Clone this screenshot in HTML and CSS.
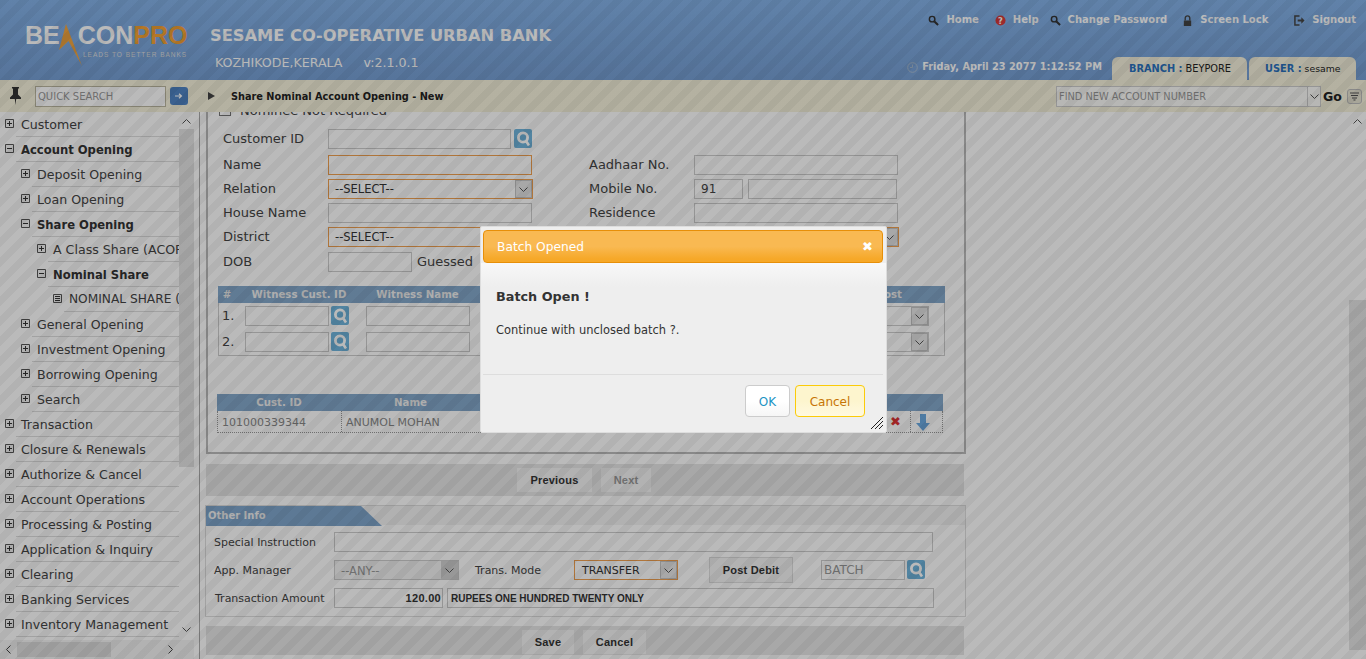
FILE: index.html
```html
<!DOCTYPE html>
<html lang="en">
<head>
    <meta charset="UTF-8">
    <title>Share Nominal Account Opening - New</title>
    <link rel="stylesheet" href="styles.css">
</head>
<body>
    <svg class="defs" width="0" height="0">
        <symbol id="i-plus" viewBox="0 0 9 9"><path d="M.5.5h8v8h-8z" fill="#f4f4f4" stroke="#555"/><path d="M2 4.5h5M4.5 2v5" stroke="#333"/></symbol>
        <symbol id="i-minus" viewBox="0 0 9 9"><path d="M.5.5h8v8h-8z" fill="#f4f4f4" stroke="#555"/><path d="M2 4.5h5" stroke="#333"/></symbol>
        <symbol id="i-leaf" viewBox="0 0 9 9"><path d="M.5.5h8v8h-8z" fill="#f4f4f4" stroke="#555"/><path d="M2 2.5h5M2 4.5h5M2 6.5h5" stroke="#333"/></symbol>
        <symbol id="i-find" viewBox="0 0 18 19"><rect width="18" height="19" rx="2" fill="#6fb4dc"/><circle cx="9" cy="8.5" r="4.6" fill="none" stroke="#fff" stroke-width="2.8"/><path d="M12 12l3 4.5" stroke="#fff" stroke-width="2.6"/></symbol>
        <symbol id="i-lens" viewBox="0 0 12 12"><circle cx="4.5" cy="4.5" r="3" fill="none" stroke="#333" stroke-width="1.6"/><path d="M7 7l4 4" stroke="#333" stroke-width="2.2"/></symbol>
        <symbol id="i-chev" viewBox="0 0 9 5"><path d="M.5.5l4 4 4-4" fill="none" stroke="#555"/></symbol>
    </svg>

    <div class="header">
        <div class="logo">
            <div class="logo-word">
                <span>BE</span>
                <svg class="logo-peak" width="26" height="43" viewBox="0 0 26 43"><path d="M9 0 L25 42 L11.5 17 L2 26 Z" fill="#f0a540"/></svg>
                <span>CON</span><span class="logo-pro">PRO</span>
            </div>
            <div class="logo-tag">LEADS TO BETTER BANKS</div>
        </div>
        <div class="bank">
            <div class="bank-name">SESAME CO-OPERATIVE URBAN BANK</div>
            <div class="bank-sub"><span>KOZHIKODE,KERALA</span><span class="bank-ver">v:2.1.0.1</span></div>
        </div>
        <div class="header-right">
            <div class="top-links">
                <a class="top-link link-home"><svg class="top-icon"><use href="#i-lens"/></svg>Home</a>
                <a class="top-link link-help"><svg class="top-icon" viewBox="0 0 12 12"><circle cx="6" cy="6" r="5.5" fill="#d83a3a"/><text x="6" y="9.5" text-anchor="middle" font-size="9" font-weight="700" fill="#fff">?</text></svg>Help</a>
                <a class="top-link link-pass"><svg class="top-icon"><use href="#i-lens"/></svg>Change Password</a>
                <a class="top-link link-lock"><svg class="top-icon" viewBox="0 0 12 12"><path d="M3.5 6V3.5a2.5 2.5 0 0 1 5 0V6" fill="none" stroke="#444" stroke-width="1.5"/><rect x="2" y="6" width="8" height="6" fill="#444"/></svg>Screen Lock</a>
                <a class="top-link link-out"><svg class="top-icon" viewBox="0 0 12 12"><path d="M6 1H1v10h5" fill="none" stroke="#444" stroke-width="1.6"/><path d="M4 5h4V2.5L11.5 6 8 9.5V7H4z" fill="#444"/></svg>Signout</a>
            </div>
            <div class="status-row">
                <svg class="clock" width="11" height="11" viewBox="0 0 11 11"><circle cx="5.5" cy="5.5" r="4.8" fill="none" stroke="#a9bdd3"/><path d="M5.5 2.5v3H3" fill="none" stroke="#a9bdd3"/></svg>
                <span class="date">Friday, April 23 2077 1:12:52 PM</span>
                <div class="tab tab-branch"><b>BRANCH :</b><span>BEYPORE</span></div>
                <div class="tab tab-user"><b>USER :</b><span>sesame</span></div>
            </div>
        </div>
    </div>

    <div class="toolbar">
        <svg class="pin" width="13" height="18" viewBox="0 0 13 18"><path d="M3 0h7v1.5H9v6l3 3V12H7.2L6.5 18l-.7-6H1v-1.5l3-3v-6H3z" fill="#333"/></svg>
        <input class="quick" type="text" placeholder="QUICK SEARCH">
        <div class="quick-go"><svg width="8" height="6" viewBox="0 0 8 6"><path d="M0 3h6M4 .8L6.5 3 4 5.2" fill="none" stroke="#fff" stroke-width="1.2"/></svg></div>
        <div class="crumb-arrow"></div>
        <div class="crumb">Share Nominal Account Opening - New</div>
        <div class="find">
            <span>FIND NEW ACCOUNT NUMBER</span>
            <div class="find-btn"><svg width="9" height="5"><use href="#i-chev"/></svg></div>
        </div>
        <div class="go">Go</div>
        <div class="menu-btn"><svg width="9" height="9" viewBox="0 0 9 9"><path d="M0 1h9M1 3.5h7M2 6h5M3.5 8h2" stroke="#555"/></svg></div>
    </div>

    <div class="workspace">
        <div class="sidebar">
            <div class="tree-wrap">
                <ul class="tree">
                    <li class="lv0"><svg class="ex"><use href="#i-plus"/></svg><span>Customer</span></li>
                    <li class="lv0 open"><svg class="ex"><use href="#i-minus"/></svg><span>Account Opening</span></li>
                    <li class="lv1"><svg class="ex"><use href="#i-plus"/></svg><span>Deposit Opening</span></li>
                    <li class="lv1"><svg class="ex"><use href="#i-plus"/></svg><span>Loan Opening</span></li>
                    <li class="lv1 open"><svg class="ex"><use href="#i-minus"/></svg><span>Share Opening</span></li>
                    <li class="lv2"><svg class="ex"><use href="#i-plus"/></svg><span>A Class Share (ACOPENING)</span></li>
                    <li class="lv2 open"><svg class="ex"><use href="#i-minus"/></svg><span>Nominal Share</span></li>
                    <li class="lv3"><svg class="ex"><use href="#i-leaf"/></svg><span>NOMINAL SHARE (NEW)</span></li>
                    <li class="lv1"><svg class="ex"><use href="#i-plus"/></svg><span>General Opening</span></li>
                    <li class="lv1"><svg class="ex"><use href="#i-plus"/></svg><span>Investment Opening</span></li>
                    <li class="lv1"><svg class="ex"><use href="#i-plus"/></svg><span>Borrowing Opening</span></li>
                    <li class="lv1"><svg class="ex"><use href="#i-plus"/></svg><span>Search</span></li>
                    <li class="lv0"><svg class="ex"><use href="#i-plus"/></svg><span>Transaction</span></li>
                    <li class="lv0"><svg class="ex"><use href="#i-plus"/></svg><span>Closure &amp; Renewals</span></li>
                    <li class="lv0"><svg class="ex"><use href="#i-plus"/></svg><span>Authorize &amp; Cancel</span></li>
                    <li class="lv0"><svg class="ex"><use href="#i-plus"/></svg><span>Account Operations</span></li>
                    <li class="lv0"><svg class="ex"><use href="#i-plus"/></svg><span>Processing &amp; Posting</span></li>
                    <li class="lv0"><svg class="ex"><use href="#i-plus"/></svg><span>Application &amp; Inquiry</span></li>
                    <li class="lv0"><svg class="ex"><use href="#i-plus"/></svg><span>Clearing</span></li>
                    <li class="lv0"><svg class="ex"><use href="#i-plus"/></svg><span>Banking Services</span></li>
                    <li class="lv0"><svg class="ex"><use href="#i-plus"/></svg><span>Inventory Management</span></li>
                </ul>
                <div class="vbar">
                    <svg class="bar-up" width="9" height="5"><use href="#i-chev"/></svg>
                    <div class="vthumb"></div>
                    <svg class="bar-down" width="9" height="5"><use href="#i-chev"/></svg>
                </div>
            </div>
            <div class="hbar">
                <svg class="bar-left" width="5" height="9" viewBox="0 0 5 9"><path d="M4.5.5l-4 4 4 4" fill="none" stroke="#444"/></svg>
                <div class="hthumb"></div>
                <svg class="bar-right" width="5" height="9" viewBox="0 0 5 9"><path d="M.5.5l4 4-4 4" fill="none" stroke="#444"/></svg>
            </div>
        </div>

        <div class="content">
            <div class="form-box">
                <div class="nominee"><span class="check"></span>Nominee Not Required</div>

                <div class="fields">
                    <label>Customer ID</label>
                    <div class="cell-left"><input class="in w183" type="text"><svg class="find-icon"><use href="#i-find"/></svg></div>
                    <span></span><span></span><span></span>

                    <label>Name</label>
                    <input class="in w204 req" type="text">
                    <span></span>
                    <label>Aadhaar No.</label>
                    <input class="in w204" type="text">

                    <label>Relation</label>
                    <div class="sel w205 req">--SELECT--<i class="sel-btn"><svg width="9" height="5"><use href="#i-chev"/></svg></i></div>
                    <span></span>
                    <label>Mobile No.</label>
                    <div class="cell-left"><input class="in w49" type="text" value="91"><input class="in w149" type="text"></div>

                    <label>House Name</label>
                    <input class="in w204" type="text">
                    <span></span>
                    <label>Residence</label>
                    <input class="in w204" type="text">

                    <label>District</label>
                    <div class="sel w205 req">--SELECT--<i class="sel-btn"><svg width="9" height="5"><use href="#i-chev"/></svg></i></div>
                    <span></span>
                    <label>Taluk</label>
                    <div class="sel w205 req">--SELECT--<i class="sel-btn"><svg width="9" height="5"><use href="#i-chev"/></svg></i></div>

                    <label>DOB</label>
                    <div class="cell-left"><input class="in w84" type="text"><span class="guess">Guessed</span></div>
                    <span></span><span></span><span></span>
                </div>

                <div class="witness">
                    <div class="wit-head">
                        <span>#</span><span>Witness Cust. ID</span><span class="wit-name">Witness Name</span><span class="wit-last">Post</span>
                    </div>
                    <div class="wit-row">
                        <span>1.</span>
                        <div class="cell-left"><input class="in w84" type="text"><svg class="find-icon"><use href="#i-find"/></svg></div>
                        <input class="in w104" type="text">
                        <div class="sel wit-sel">--<i class="sel-btn"><svg width="9" height="5"><use href="#i-chev"/></svg></i></div>
                    </div>
                    <div class="wit-row">
                        <span>2.</span>
                        <div class="cell-left"><input class="in w84" type="text"><svg class="find-icon"><use href="#i-find"/></svg></div>
                        <input class="in w104" type="text">
                        <div class="sel wit-sel">--<i class="sel-btn"><svg width="9" height="5"><use href="#i-chev"/></svg></i></div>
                    </div>
                </div>

                <div class="nominees">
                    <div class="nom-head"><span>Cust. ID</span><span>Name</span><span></span><span></span></div>
                    <div class="nom-row">
                        <span>101000339344</span>
                        <span>ANUMOL MOHAN</span>
                        <span class="nom-del">&#10006;</span>
                        <span class="nom-move"><svg width="14" height="17" viewBox="0 0 14 17"><path d="M4 0h6v9h4l-7 8-7-8h4z" fill="#6aa8e0"/></svg></span>
                    </div>
                </div>
            </div>

            <div class="btn-bar bar-nav">
                <button class="btn b-prev">Previous</button>
                <button class="btn b-next" disabled>Next</button>
            </div>

            <div class="other">
                <div class="other-head"><div class="other-tab">Other Info</div></div>
                <div class="other-row">
                    <label class="ol">Special Instruction</label>
                    <input class="in w599" type="text">
                </div>
                <div class="other-row">
                    <label class="ol">App. Manager</label>
                    <div class="sel w125 off">--ANY--<i class="sel-btn"><svg width="9" height="5"><use href="#i-chev"/></svg></i></div>
                    <label class="trans">Trans. Mode</label>
                    <div class="sel w104 req">TRANSFER<i class="sel-btn"><svg width="9" height="5"><use href="#i-chev"/></svg></i></div>
                    <button class="btn post">Post Debit</button>
                    <input class="in w84 batch" type="text" placeholder="BATCH">
                    <svg class="find-icon"><use href="#i-find"/></svg>
                </div>
                <div class="other-row">
                    <label class="ol ol-amt">Transaction Amount</label>
                    <input class="in w109 amount" type="text" value="120.00">
                    <input class="in w487 words" type="text" value="RUPEES ONE HUNDRED TWENTY ONLY">
                </div>
            </div>

            <div class="btn-bar bar-save">
                <button class="btn b-save">Save</button>
                <button class="btn b-cancel">Cancel</button>
            </div>
        </div>

        <div class="page-bar">
            <svg class="bar-up" width="9" height="5"><use href="#i-chev"/></svg>
            <div class="page-thumb"></div>
        </div>
    </div>

    <div class="overlay"></div>

    <div class="dialog">
        <div class="dialog-title"><span>Batch Opened</span><span class="dialog-close">&#10006;</span></div>
        <div class="dialog-body">
            <h3>Batch Open !</h3>
            <p>Continue with unclosed batch ?.</p>
        </div>
        <div class="dialog-foot">
            <button class="d-ok">OK</button>
            <button class="d-cancel">Cancel</button>
        </div>
        <svg class="grip" width="12" height="12" viewBox="0 0 12 12"><path d="M0 12L12 0M4 12l8-8M8 12l4-4" stroke="#222"/></svg>
    </div>
</body>
</html>
```
FILE: styles.css
```css
/* page */
* {
    box-sizing: border-box;
}

body {
    margin: 0;
    width: 1366px;
    height: 659px;
    overflow: hidden;
    position: relative;
    background-color: #fff;
    font-family: "DejaVu Sans", sans-serif;
    font-size: 13px;
    color: #444;
}

.defs {
    position: absolute;
}

/* header */
.header {
    height: 80px;
    display: flex;
    background: linear-gradient(#84b2e8, #769fd4);
}

.logo {
    margin: 20px 0 0 25px;
    width: 161px;
    font-family: "Liberation Sans", sans-serif;
}

.logo-word {
    display: flex;
    height: 31px;
    align-items: flex-start;
    font-size: 25px;
    font-weight: 700;
    line-height: 30px;
    color: #fff;
}

.logo-peak {
    margin: 4px -5px 0 -3px;
    flex: none;
}

.logo-pro {
    color: #f6a334;
}

.logo-tag {
    margin: 0 0 0 58px;
    font-size: 6.5px;
    letter-spacing: 1px;
    line-height: 8px;
    color: #ddd;
    white-space: nowrap;
}

.bank {
    margin: 25px 0 0 24px;
    color: #fff;
}

.bank-name {
    font-size: 16.25px;
    font-weight: 700;
    line-height: 22px;
    white-space: nowrap;
}

.bank-sub {
    margin: 8px 0 0 5px;
    font-size: 12.6px;
    line-height: 16px;
    white-space: nowrap;
}

.bank-ver {
    margin-left: 21px;
}

.header-right {
    margin-left: auto;
    display: flex;
    flex-direction: column;
    align-items: flex-end;
    padding-right: 10px;
}

.top-links {
    display: flex;
    margin-top: 13px;
    height: 14px;
    font-size: 10px;
    font-weight: 700;
    line-height: 14px;
    color: #fff;
}

.top-link {
    display: flex;
    align-items: center;
    white-space: nowrap;
}

.top-icon {
    width: 11px;
    height: 11px;
    margin-right: 7px;
}

.link-help {
    margin-left: 16px;
}

.link-pass {
    margin-left: 11px;
}

.link-lock {
    margin-left: 15px;
}

.link-out {
    margin-left: 26px;
}

.status-row {
    margin-top: 30px;
    display: flex;
    align-items: flex-end;
    height: 23px;
}

.clock {
    margin: 0 4px 7px 0;
}

.date {
    font-size: 9.8px;
    font-weight: 700;
    line-height: 14px;
    color: #fff;
    margin-bottom: 6px;
    white-space: nowrap;
}

.tab {
    height: 23px;
    background-color: #f5f1dd;
    border-radius: 6px 6px 0 0;
    font-size: 9.8px;
    line-height: 23px;
    color: #222;
    white-space: nowrap;
    display: flex;
}

.tab b {
    color: #2a72c0;
}

.tab-branch {
    width: 135px;
    margin-left: 10px;
    padding-left: 17px;
}

.tab-branch span {
    margin-left: 3px;
}

.tab-user {
    width: 107px;
    margin-left: 2px;
    padding-left: 16px;
}

.tab-user span {
    margin-left: 3px;
    font-size: 9.3px;
}

/* toolbar */
.toolbar {
    height: 32px;
    display: flex;
    align-items: center;
    background-color: #f7f3dd;
}

.pin {
    margin-left: 9px;
    flex: none;
}

.quick {
    width: 131px;
    height: 21px;
    margin-left: 13px;
    padding: 0 2px;
    background-color: #fff;
    border: 1px solid #bbb7a0;
    font: 10px "DejaVu Sans", sans-serif;
}

.quick::placeholder, .batch::placeholder {
    color: #999;
    opacity: 1;
}

.quick-go {
    width: 18px;
    height: 18px;
    margin-left: 4px;
    border-radius: 3px;
    background-color: #4f84c4;
    display: flex;
    align-items: center;
    justify-content: center;
}

.crumb-arrow {
    margin-left: 20px;
    border-left: 7px solid #444;
    border-top: 4px solid transparent;
    border-bottom: 4px solid transparent;
}

.crumb {
    margin-left: 16px;
    font-size: 9.75px;
    font-weight: 700;
    color: #222;
    white-space: nowrap;
}

.find {
    margin-left: auto;
    width: 265px;
    height: 21px;
    display: flex;
    align-items: center;
    justify-content: space-between;
    padding-left: 2px;
    background-color: #fbfbf8;
    border: 1px solid #ccc;
    font-size: 9.8px;
    color: #999;
}

.find-btn {
    width: 13px;
    height: 19px;
    display: flex;
    align-items: center;
    justify-content: center;
    border-left: 1px solid #ccc;
}

.go {
    width: 17px;
    flex: none;
    margin-left: 2px;
    font-size: 12.5px;
    font-weight: 700;
    color: #222;
}

.menu-btn {
    width: 15px;
    height: 15px;
    margin: 0 4px 0 7px;
    border: 1px solid #bbb;
    border-radius: 3px;
    background-color: #e6e3d2;
    display: flex;
    align-items: center;
    justify-content: center;
}

/* left tree */
.workspace {
    display: flex;
    height: 547px;
}

.sidebar {
    width: 200px;
    flex: none;
    border-right: 1px solid #aaa;
    padding-right: 5px;
}

.tree-wrap {
    height: 528px;
    display: flex;
}

.tree {
    list-style: none;
    margin: 0;
    padding: 0;
    width: 179px;
    height: 528px;
    overflow: hidden;
}

.tree li {
    height: 25px;
    display: flex;
}

.tree li span {
    flex: 1;
    min-width: 0;
    padding-left: 5px;
    font-size: 12.6px;
    line-height: 25px;
    white-space: nowrap;
    overflow: hidden;
    border-bottom: 1px solid #ddd;
}

.tree .open span {
    font-weight: 700;
    font-size: 11.6px;
    line-height: 26px;
    color: #333;
}

.tree .lv3 span {
    font-size: 12.2px;
}

.ex {
    width: 9px;
    height: 9px;
    margin: 7px 2px 0 0;
    flex: none;
}

.lv0 .ex { margin-left: 5px; }
.lv1 .ex { margin-left: 21px; }
.lv2 .ex { margin-left: 37px; }
.lv3 .ex { margin-left: 53px; }

/* scroll bars */
.vbar {
    width: 15px;
    height: 528px;
    position: relative;
    display: flex;
    flex-direction: column;
    align-items: center;
}

.bar-up {
    margin-top: 7px;
    transform: rotate(180deg);
    flex: none;
}

.vthumb {
    width: 15px;
    height: 338px;
    margin-top: 5px;
    background-color: #e4e4e4;
}

.bar-down {
    margin-top: 160px;
    flex: none;
}

.hbar {
    height: 19px;
    display: flex;
    align-items: center;
    background-color: #f4f4f4;
}

.bar-left {
    margin-left: 6px;
}

.hthumb {
    width: 94px;
    height: 15px;
    margin-left: 6px;
    background-color: #dedede;
}

.bar-right {
    margin-left: 57px;
}

.page-bar {
    width: 17px;
    margin-left: auto;
    display: flex;
    flex-direction: column;
    align-items: center;
}

.page-thumb {
    width: 17px;
    height: 350px;
    margin-top: 176px;
    background-color: #e4e4e4;
}

/* main form */
.content {
    width: 766px;
    padding-left: 5px;
    height: 547px;
    overflow: hidden;
}

.form-box {
    margin: -10px 0 0 1px;
    width: 760px;
    height: 352px;
    border: 1px solid #bbb;
    border-left-width: 2px;
    border-right-width: 2px;
    border-bottom-width: 2px;
    padding: 1px 0 0 10px;
}

.nominee {
    height: 13px;
    line-height: 13px;
    display: flex;
    padding-left: 1px;
    white-space: nowrap;
}

.check {
    width: 12px;
    height: 12px;
    margin-right: 9px;
    border: 1px solid #777;
    background-color: #fff;
}

.fields {
    display: grid;
    margin: 12px 0 0 5px;
    grid-template-columns: 105px 204px 57px 105px 205px;
    grid-template-rows: 26px 24px 24px 24px 25px 20px;
    line-height: 20px;
}

.fields label {
    height: 20px;
}

.fields .find-icon {
    margin-left: 3px;
}

.cell-left {
    display: flex;
    align-items: flex-start;
}

.in {
    height: 20px;
    padding: 0 6px;
    background-color: #fff;
    border: 1px solid #ccc;
    font: 12px "DejaVu Sans", sans-serif;
    color: #444;
}

.req {
    border-color: #f0a050;
}

.w183 { width: 183px; }
.w204 { width: 204px; }
.w205 { width: 205px; }
.w49 { width: 49px; }
.w149 { width: 149px; margin-left: 5px; }
.w84 { width: 84px; }
.w104 { width: 104px; }
.w125 { width: 125px; }
.w109 { width: 109px; }
.w487 { width: 487px; margin-left: 4px; }
.w599 { width: 599px; }

.find-icon {
    width: 18px;
    height: 19px;
    margin-left: 2px;
    flex: none;
}

.sel {
    height: 20px;
    padding-left: 6px;
    display: flex;
    justify-content: space-between;
    background-color: #fff;
    border: 1px solid #ccc;
    font-size: 11.5px;
    line-height: 18px;
    color: #333;
    white-space: nowrap;
}

.sel.req {
    border-color: #f0a050;
}

.sel-btn {
    width: 17px;
    height: 18px;
    display: flex;
    align-items: center;
    justify-content: center;
    background-color: #e6e6e6;
    border: 1px solid #c4c4c4;
}

.off {
    color: #999;
    background-color: #f2f2f2;
}

.off .sel-btn {
    background-color: #d0d0d0;
    border-color: #d0d0d0;
}

.guess {
    margin-left: 5px;
}

/* witness table */
.witness {
    width: 727px;
    height: 70px;
    margin-top: 14px;
    border: 1px solid #ccc;
    border-top: none;
}

.wit-head {
    height: 17px;
    margin: 0 -1px;
    display: grid;
    grid-template-columns: 18px 126px 107px 1fr;
    background-color: #84a8cb;
    font-size: 10.2px;
    font-weight: 700;
    line-height: 17px;
    color: #eee;
    text-align: center;
    white-space: nowrap;
}

.wit-name {
    margin-left: 4px;
}

.wit-last {
    text-align: right;
    padding-right: 43px;
}

.wit-row {
    display: grid;
    grid-template-columns: 23px 121px 464px 99px;
    height: 20px;
    margin-top: 6px;
    padding-left: 3px;
    line-height: 20px;
}

.wit-head + .wit-row {
    margin-top: 3px;
}

/* nominee list */
.nominees {
    width: 726px;
    height: 39px;
    margin: 38px 0 0 -1px;
}

.nom-head, .nom-row {
    display: grid;
    grid-template-columns: 124px 139px 430px 33px;
}

.nom-head {
    height: 17px;
    background-color: #84a8cb;
    font-size: 10.2px;
    font-weight: 700;
    line-height: 17px;
    color: #eee;
    text-align: center;
}

.nom-row {
    height: 22px;
    grid-template-rows: 21px;
    font-size: 11px;
    line-height: 23px;
    color: #888;
    border-bottom: 1px dotted #999;
    border-left: 1px dotted #999;
    border-right: 1px dotted #999;
}

.nom-row span {
    padding-left: 4px;
    border-right: 1px dotted #999;
    overflow: hidden;
}

.nom-row span:last-child {
    border-right: none;
}

.nom-del {
    text-align: right;
    padding-right: 9px;
    font-size: 13px;
    line-height: 22px;
    color: #d33;
}

.nom-move svg {
    margin: 3px 0 0 1px;
}

/* button bars */
.btn-bar {
    width: 760px;
    margin-top: 9px;
    border: 1px solid #fff;
    background-color: #e6e6e6;
    display: flex;
    justify-content: flex-start;
}

.bar-nav {
    height: 34px;
    padding: 4px 0 0 311px;
}

.bar-save {
    height: 31px;
    margin-top: 8px;
    padding: 4px 0 0 316px;
}

.btn {
    height: 24px;
    border: none;
    background-color: #f4f4f4;
    font: 700 11px "Liberation Sans", sans-serif;
    letter-spacing: .2px;
    color: #333;
}

.b-prev {
    width: 75px;
}

.b-next {
    width: 50px;
    margin-left: 9px;
    color: #999;
}

.b-save {
    width: 52px;
}

.b-cancel {
    width: 63px;
    margin-left: 9px;
}

.post {
    width: 84px;
    height: 26px;
    margin: -3px 0 0 31px;
    border: 1px solid #ddd;
}

/* other info */
.other {
    width: 761px;
    height: 112px;
    margin-top: 8px;
    border: 1px solid #ddd;
    font-size: 11px;
}

.other-head {
    height: 19px;
    background-color: #f2f2f2;
}

.other-tab {
    width: 176px;
    height: 20px;
    padding-left: 2px;
    clip-path: polygon(0 0, 155px 0, 176px 100%, 0 100%);
    background-color: #7fa6cc;
    font-size: 10px;
    font-weight: 700;
    line-height: 20px;
    color: #eee;
}

.other-row {
    height: 20px;
    margin-top: 8px;
    display: flex;
    line-height: 22px;
    white-space: nowrap;
}

.other-head + .other-row {
    margin-top: 7px;
}

.other-row .sel {
    font-size: 11px;
    line-height: 20px;
    padding-left: 7px;
}

.other-row .off {
    padding-left: 6px;
    font-size: 11.5px;
}

.ol {
    width: 128px;
    flex: none;
    padding-left: 8px;
}

.ol-amt {
    padding-left: 9px;
}

.trans {
    width: 99px;
    margin-left: 16px;
}

.batch {
    margin-left: 28px;
    padding-left: 2px;
}

.amount {
    text-align: right;
    padding: 0 1px 0 0;
    font: 700 11px "Liberation Sans", sans-serif;
    letter-spacing: .3px;
    color: #333;
}

.words {
    padding: 0 3px;
    font: 700 10px "Liberation Sans", sans-serif;
    color: #333;
}

/* modal */
.overlay {
    position: absolute;
    inset: 0;
    background: repeating-linear-gradient(135deg, rgba(0, 0, 0, .3) 0 7px, rgba(0, 0, 0, .27) 7px 14px);
}

.dialog {
    position: absolute;
    left: 480px;
    top: 226px;
    width: 407px;
    height: 207px;
    padding: 3px 3px 0 2px;
    background-color: #eee;
    border: 1px solid #ddd;
    border-radius: 2px;
}

.dialog-title {
    height: 33px;
    padding: 0 9px 0 13px;
    display: flex;
    justify-content: space-between;
    align-items: center;
    background: linear-gradient(#f9b952 50%, #f6a828 90%);
    border: 1px solid #e78f08;
    border-radius: 4px;
    font-size: 12.25px;
    color: #fff;
}

.dialog-close {
    font-size: 13px;
    font-weight: 700;
}

.dialog-body {
    height: 111px;
    padding: 23px 13px 0;
    margin: 0 -3px 0 -2px;
    background: linear-gradient(#f8f8f8, #eee 24px);
    color: #333;
}

.dialog-body h3 {
    margin: 0 0 0 2px;
    font-size: 12.8px;
    line-height: 22px;
}

.dialog-body p {
    margin: 14px 0 0 2px;
    font-size: 11.45px;
    line-height: 16px;
}

.dialog-foot {
    height: 55px;
    padding: 10px 18px 0 0;
    display: flex;
    justify-content: flex-end;
    border-top: 1px solid #ddd;
}

.dialog-foot button {
    height: 32px;
    padding-top: 2px;
    border-radius: 4px;
    font: 12px "DejaVu Sans", sans-serif;
}

.d-ok {
    width: 45px;
    background: linear-gradient(#fff 50%, #f6f6f6);
    border: 1px solid #ccc;
    color: #1c94c4;
}

.d-cancel {
    width: 70px;
    margin-left: 5px;
    background: linear-gradient(#fdf5ce 50%, #fff9e0);
    border: 1px solid #fbcb09;
    color: #c77405;
}

.grip {
    position: absolute;
    right: 3px;
    bottom: 3px;
}
```
